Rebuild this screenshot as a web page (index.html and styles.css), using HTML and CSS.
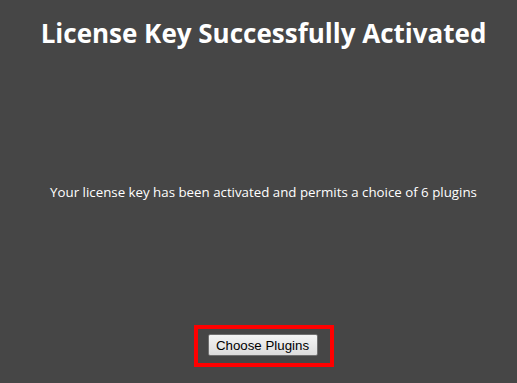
FILE: index.html
```html
<!DOCTYPE html>
<html lang="en">
<head>
    <meta charset="UTF-8">
    <meta name="viewport" content="width=device-width, initial-scale=1.0">
    <title>License Activated</title>
    <link rel="stylesheet" href="styles.css">
</head>
<body>

    <div class="page">
        <h1 class="title">License Key Successfully Activated</h1>
        <p class="message">Your license key has been activated and permits a choice of 6 plugins</p>
        <div class="actions">
            <div class="highlight">
                <button class="choose">Choose Plugins</button>
            </div>
        </div>
    </div>

</body>
</html>
```

FILE: styles.css
```css
* {
    margin: 0;
    padding: 0;
    box-sizing: border-box;
}

html, body {
    height: 100%;
}

body {
    background: #464646;
    color: #ffffff;
    font-family: "Open Sans", "Noto Sans", sans-serif;
}

.page {
    display: flex;
    flex-direction: column;
    align-items: center;
    height: 100%;
    padding-left: 10px;
}

.title {
    margin-top: 15px;
    font-size: 26px;
    font-weight: 700;
    line-height: 36px;
    text-align: center;
}

.message {
    margin-top: 132px;
    font-size: 13.3px;
    line-height: 18px;
    text-align: center;
}

.actions {
    margin-top: 124px;
}

.highlight {
    border: 4px solid #ff0000;
    padding: 5px 12px 7px 10px;
}

.choose {
    display: block;
    width: 110px;
    height: 22px;
    font-family: "Liberation Sans", Arial, sans-serif;
    font-size: 13.3px;
    color: #000000;
    background: linear-gradient(#f4f4f4, #dcdcdc);
    border: 1px solid #707070;
    border-radius: 2px;
}
```
